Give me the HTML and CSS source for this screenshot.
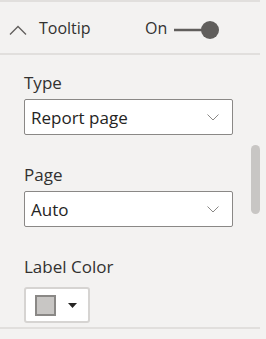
FILE: index.html
```html
<!DOCTYPE html>
<html lang="en">
  <head>
    <meta charset="UTF-8" />
    <meta name="viewport" content="width=device-width, initial-scale=1.0" />
    <title>Tooltip settings</title>
    <link rel="stylesheet" href="styles.css">
  </head>
  <body>
    <div class="pane">
      <!-- Tooltip card -->
      <div class="card">
        <div class="card-header">
          <svg class="chevron-up" width="18" height="10" viewBox="0 0 18 10">
            <polyline points="1,9.5 9,1.5 17,9.5" fill="none" stroke="#605e5c" stroke-width="1.3" />
          </svg>
          <span class="card-title">Tooltip</span>
          <span class="toggle-label">On</span>
          <svg class="toggle" width="45" height="18" viewBox="0 0 45 18">
            <line x1="0" y1="9" x2="32" y2="9" stroke="#605e5c" stroke-width="2.5" />
            <circle cx="36" cy="9" r="9" fill="#605e5c" />
          </svg>
        </div>
        <div class="card-body">
          <div class="field">
            <div class="field-label">Type</div>
            <div class="dropdown">
              <span>Report page</span>
              <svg width="12" height="7" viewBox="0 0 12 7">
                <polyline points="0.5,0.5 6,6 11.5,0.5" fill="none" stroke="#8a8886" stroke-width="1" />
              </svg>
            </div>
          </div>
          <div class="field">
            <div class="field-label">Page</div>
            <div class="dropdown">
              <span>Auto</span>
              <svg width="12" height="7" viewBox="0 0 12 7">
                <polyline points="0.5,0.5 6,6 11.5,0.5" fill="none" stroke="#8a8886" stroke-width="1" />
              </svg>
            </div>
          </div>
          <div class="field">
            <div class="field-label label-color">Label Color</div>
            <div class="color-picker">
              <div class="swatch"></div>
              <svg class="caret" width="9" height="5" viewBox="0 0 9 5">
                <polygon points="0,0 9,0 4.5,5" fill="#252423" />
              </svg>
            </div>
          </div>
        </div>
      </div>
      <div class="scrollbar"></div>
    </div>
  </body>
</html>
```

FILE: styles.css
```css
/* Base */
* {
  margin: 0;
  padding: 0;
  box-sizing: border-box;
}

body {
  background: #f3f2f1;
  font-family: "Open Sans", "Noto Sans", sans-serif;
  color: #323130;
}

.pane {
  position: relative;
  width: 260px;
}

/* Card header */
.card {
  border-top: 2px solid #e1dfdd;
  border-bottom: 2px solid #e1dfdd;
}

.card-header {
  display: flex;
  align-items: center;
  height: 53px;
  padding-left: 9px;
  border-bottom: 2px solid #e1dfdd;
}

.chevron-up {
  margin-top: 5px;
  margin-right: 12px;
}

.card-title {
  width: 106px;
  font-size: 16px;
  line-height: 24px;
}

.toggle-label {
  font-size: 16px;
  line-height: 24px;
}

.toggle {
  margin-left: 7px;
  margin-top: 5px;
}

/* Fields */
.card-body {
  padding: 16px 0 4px 24px;
}

.field {
  margin-bottom: 28px;
}

.field:last-child {
  margin-bottom: 0;
}

.field-label {
  font-size: 17px;
  line-height: 24px;
  margin-bottom: 4px;
}

.label-color {
  margin-bottom: 8px;
}

.dropdown {
  display: flex;
  align-items: center;
  justify-content: space-between;
  width: 209px;
  height: 36px;
  padding: 0 13px 0 6px;
  background: #fff;
  border: 1.5px solid #8a8886;
  border-radius: 2px;
  font-size: 17px;
  color: #252423;
}

.dropdown svg {
  margin-top: 1px;
}

/* Color picker */
.color-picker {
  display: flex;
  align-items: center;
  width: 66px;
  height: 36px;
  padding-left: 9px;
  background: #fff;
  border: 2px solid #d6d4d2;
  border-radius: 3px;
}

.swatch {
  width: 21px;
  height: 21px;
  background: #c8c6c4;
  border: 2px solid #8a8886;
}

.caret {
  margin-left: 12px;
}

/* Scrollbar thumb over the pane */
.scrollbar {
  position: absolute;
  left: 251px;
  top: 145px;
  width: 9px;
  height: 69px;
  border-radius: 5px;
  background: #c8c6c4;
}
```
